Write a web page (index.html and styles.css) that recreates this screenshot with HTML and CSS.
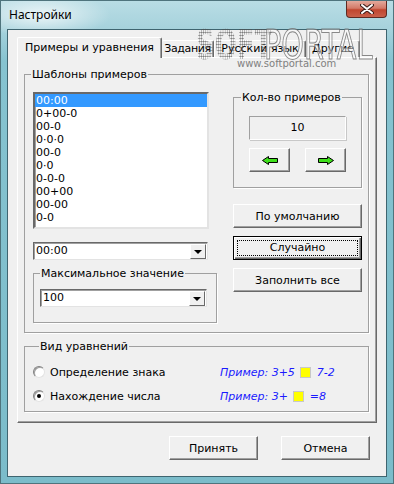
FILE: index.html
```html
<html>
<head>
<title>Настройки</title>
<link rel="stylesheet" href="styles.css">
</head>
<body>
<div class="window">
  <div class="titlebar">
    <span class="title">Настройки</span>
    <div class="close">
      <svg width="14" height="10" viewBox="0 0 14 10"><path d="M2 1 L12 9 M12 1 L2 9" stroke="#3b1c18" stroke-width="4" stroke-linecap="round"/><path d="M2 1 L12 9 M12 1 L2 9" stroke="#fff" stroke-width="2" stroke-linecap="round"/></svg>
    </div>
  </div>

  <div class="client">
    <div class="tabs">
      <div class="tab active">Примеры и уравнения</div>
      <div class="tab t2">Задания</div>
      <div class="tab t3">Русский язык</div>
      <div class="tab t4">Другие</div>
    </div>

    <div class="panel">
      <fieldset class="group g-templates">
        <legend>Шаблоны примеров</legend>
        <div class="templates-body">
          <div class="col-left">
            <ul class="listbox">
              <li class="sel">00:00</li>
              <li>0+00-0</li>
              <li>00-0</li>
              <li>0·0·0</li>
              <li>00-0</li>
              <li>0·0</li>
              <li>0-0-0</li>
              <li>00+00</li>
              <li>00-00</li>
              <li>0-0</li>
            </ul>
            <div class="combo c-templ"><span>00:00</span><span class="drop"><i></i></span></div>
            <fieldset class="group g-max">
              <legend>Максимальное значение</legend>
              <div class="combo c-max"><span>100</span><span class="drop"><i></i></span></div>
            </fieldset>
          </div>
          <div class="col-right">
            <fieldset class="group g-count">
              <legend>Кол-во примеров</legend>
              <div class="count">10</div>
              <div class="arrows">
                <div class="btn arrow">
                  <svg width="16" height="9" viewBox="0 0 16 9"><polygon points="0.5,4.5 6.5,0.5 6.5,2.5 15.5,2.5 15.5,6.5 6.5,6.5 6.5,8.5" fill="#3ee01a" stroke="#000" stroke-width="1"/></svg>
                </div>
                <div class="btn arrow">
                  <svg width="16" height="9" viewBox="0 0 16 9"><polygon points="15.5,4.5 9.5,0.5 9.5,2.5 0.5,2.5 0.5,6.5 9.5,6.5 9.5,8.5" fill="#3ee01a" stroke="#000" stroke-width="1"/></svg>
                </div>
              </div>
            </fieldset>
            <div class="btn wide">По умолчанию</div>
            <div class="btn wide focus"><span>Случайно</span></div>
            <div class="btn wide">Заполнить все</div>
          </div>
        </div>
      </fieldset>

      <fieldset class="group g-kind">
        <legend>Вид уравнений</legend>
        <div class="kind-row">
          <span class="radio"></span>
          <span class="kind-label">Определение знака</span>
          <span class="sample">Пример: 3+5 <b class="box"></b> 7-2</span>
        </div>
        <div class="kind-row">
          <span class="radio on"></span>
          <span class="kind-label">Нахождение числа</span>
          <span class="sample">Пример: 3+ <b class="box"></b> =8</span>
        </div>
      </fieldset>
    </div>

    <div class="footer">
      <div class="btn foot">Принять</div>
      <div class="btn foot">Отмена</div>
    </div>
  </div>

  <div class="watermark">
    <span class="wm-soft">SOFT</span>
    <span class="wm-portal">PORTAL</span>
    <span class="wm-url">www.softportal.com</span>
  </div>
</div>
</body>
</html>
```

FILE: styles.css
```css
* {
  box-sizing: border-box;
}

body {
  margin: 0;
  font-family: "DejaVu Sans", sans-serif;
  font-size: 11px;
  color: #000;
}

.window {
  position: relative;
  width: 394px;
  height: 484px;
  overflow: hidden;
  display: flex;
  flex-direction: column;
  padding: 0 6px 6px;
  border: 1px solid #4f747d;
  background: radial-gradient(ellipse 70px 22px at 40px 14px, rgba(255,255,255,0.75), rgba(255,255,255,0) 100%),
              linear-gradient(to bottom, #b9dde5 0, #a6d2dc 28px, #86c3d0 60px, #7bbcca 100%);
}

.titlebar {
  height: 28px;
  margin: 0 -6px;
  padding-left: 8px;
  display: flex;
}

.title {
  font-family: "Noto Sans", sans-serif;
  font-size: 12px;
  line-height: 28px;
}

.close {
  margin-left: auto;
  margin-right: 6px;
  width: 41px;
  height: 17px;
  border: 1px solid #5e2a22;
  border-top: none;
  border-radius: 0 0 4px 4px;
  background: linear-gradient(to bottom, #e3a99c 0, #d47a68 45%, #c0462f 55%, #c9604a 100%);
  display: flex;
  align-items: center;
  justify-content: center;
}

.close svg {
  display: block;
}

.client {
  flex: 1;
  border: 1px solid #3f6570;
  background: #f0f0f0;
  padding-top: 7px;
}

/* tabs */
.tabs {
  height: 20px;
  padding-left: 9px;
  display: flex;
  align-items: flex-end;
  position: relative;
  z-index: 1;
}

.tab {
  height: 17px;
  line-height: 15px;
  text-align: center;
  white-space: nowrap;
  overflow: hidden;
  background: #f0f0f0;
  border-top: 1px solid #fff;
  border-left: 1px solid #fff;
  border-right: 1px solid #696969;
  box-shadow: inset -1px 0 0 #a0a0a0;
  border-radius: 2px 2px 0 0;
}

.tab.active {
  width: 145px;
  height: 21px;
  margin-bottom: -1px;
  line-height: 19px;
}

.t2 { width: 52px; border-left: none; letter-spacing: -0.4px; }
.t3 { width: 92px; }
.t4 { width: 54px; }

.panel {
  margin: 0 9px;
  height: 366px;
  border-top: 1px solid #fff;
  border-left: 1px solid #fff;
  border-right: 1px solid #696969;
  border-bottom: 1px solid #696969;
  box-shadow: inset -1px -1px 0 #a0a0a0;
  padding-top: 10px;
  padding-left: 6px;
}

/* group boxes */
.group {
  margin: 0;
  padding: 0;
  min-width: 0;
  border: 1px solid #a0a0a0;
  box-shadow: 1px 1px 0 #fff;
}

.group legend {
  padding: 0 1px;
  margin-left: 6px;
  line-height: 13px;
  height: 13px;
}

.g-templates {
  width: 345px;
  height: 265px;
}

.templates-body {
  display: flex;
  gap: 16px;
  padding: 10px 0 0 8px;
}

.col-left {
  width: 184px;
  display: flex;
  flex-direction: column;
}

.listbox {
  list-style: none;
  margin: 1px 0 0;
  padding: 0;
  width: 176px;
  height: 137px;
  background: #fff;
  border-top: 2px solid #696969;
  border-left: 2px solid #696969;
  border-right: 2px solid #e3e3e3;
  border-bottom: 2px solid #e3e3e3;
  box-shadow: inset 1px 1px 0 #a0a0a0;
}

.listbox li {
  height: 13px;
  line-height: 13px;
  padding-left: 1px;
}

.listbox li.sel {
  background: #3399ff;
  color: #fff;
}

.combo {
  height: 18px;
  display: flex;
  align-items: stretch;
  background: #fff;
  border-top: 1px solid #696969;
  border-left: 1px solid #696969;
  border-right: 1px solid #e3e3e3;
  border-bottom: 1px solid #e3e3e3;
  box-shadow: inset 1px 1px 0 #a0a0a0;
  line-height: 16px;
  padding-left: 2px;
}

.combo span:first-child {
  flex: 1;
}

.drop {
  width: 16px;
  margin: 1px 1px 0 0;
  background: #f0f0f0;
  border-top: 1px solid #fff;
  border-left: 1px solid #fff;
  border-right: 1px solid #696969;
  border-bottom: 1px solid #696969;
  display: flex;
  align-items: center;
  justify-content: center;
}

.drop i {
  width: 0;
  height: 0;
  border-left: 4px solid transparent;
  border-right: 4px solid transparent;
  border-top: 4px solid #000;
}

.c-templ {
  width: 175px;
  margin-top: 13px;
}

.g-max {
  margin-top: 7px;
  width: 184px;
  height: 56px;
}

.c-max {
  width: 167px;
  margin: 9px 0 0 6px;
}

.col-right {
  width: 129px;
  display: flex;
  flex-direction: column;
}

.g-count {
  width: 129px;
  height: 97px;
}

.g-count legend {
  margin-left: 7px;
}

.count {
  margin: 12px 0 0 15px;
  width: 97px;
  height: 24px;
  line-height: 22px;
  text-align: center;
  border: 1px solid #a0a0a0;
  border-right-color: #fff;
  border-bottom-color: #fff;
  box-shadow: 1px 1px 0 #c8c8c8;
}

.arrows {
  margin: 8px 0 0 15px;
  width: 97px;
  display: flex;
  justify-content: space-between;
}

/* buttons */
.btn {
  background: #f0f0f0;
  border-top: 1px solid #fff;
  border-left: 1px solid #fff;
  border-right: 1px solid #696969;
  border-bottom: 1px solid #696969;
  box-shadow: inset -1px -1px 0 #a0a0a0;
  display: flex;
  align-items: center;
  justify-content: center;
  white-space: nowrap;
}

.arrow {
  width: 41px;
  height: 24px;
}

.arrow svg {
  display: block;
}

.wide {
  width: 129px;
  height: 24px;
  margin-top: 8px;
}

.g-count + .wide {
  margin-top: 16px;
}

.btn.focus {
  border: 1px solid #000;
  box-shadow: inset 1px 1px 0 #fff, inset -1px -1px 0 #696969, inset -2px -2px 0 #a0a0a0;
  padding: 3px;
}

.btn.focus span {
  flex: 1;
  align-self: stretch;
  text-align: center;
  line-height: 14px;
  border: 1px dotted #000;
}

/* equation kind */
.g-kind {
  margin-top: 7px;
  width: 345px;
  height: 72px;
  padding: 7px 0 0 8px;
}

.kind-row {
  height: 24px;
  display: flex;
  align-items: center;
}

.radio {
  width: 12px;
  height: 12px;
  border-radius: 50%;
  background: #fff;
  border: 1px solid;
  border-color: #808080 #e3e3e3 #e3e3e3 #808080;
  box-shadow: inset 1px 1px 0 #a0a0a0;
  display: flex;
  align-items: center;
  justify-content: center;
}

.radio.on::after {
  content: "";
  width: 4px;
  height: 4px;
  border-radius: 50%;
  background: #000;
}

.kind-label {
  width: 175px;
  padding-left: 5px;
}

.sample {
  color: #1a1aff;
  font-style: italic;
  display: flex;
  align-items: center;
  white-space: pre;
}

.box {
  display: inline-block;
  width: 11px;
  height: 11px;
  background: #ffff00;
  border: 1px solid #c8c8c8;
  margin: 0 2px;
}

.footer {
  display: flex;
  justify-content: flex-end;
  gap: 23px;
  padding-right: 16px;
  margin-top: 13px;
}

.foot {
  width: 89px;
  height: 24px;
}

/* site watermark laid over the screenshot */
.watermark {
  position: absolute;
  z-index: 2;
  left: 195px;
  top: 24px;
  width: 190px;
  height: 48px;
  pointer-events: none;
  line-height: 1;
}

.wm-soft,
.wm-portal {
  position: absolute;
  top: 0;
  font-family: "DejaVu Sans Condensed", "Liberation Sans Narrow", sans-serif;
  font-size: 40px;
  transform-origin: 0 0;
}

.wm-soft {
  left: 0;
  font-weight: bold;
  transform: scaleX(0.72);
  color: transparent;
  background: radial-gradient(circle, rgba(80,80,80,0.75) 45%, transparent 50%) 0 0 / 3px 3px;
  -webkit-background-clip: text;
  background-clip: text;
}

.wm-portal {
  left: 68px;
  transform: scaleX(0.8);
  color: rgba(255,255,255,0.45);
  -webkit-text-stroke: 1px rgba(100,100,100,0.75);
}

.wm-url {
  position: absolute;
  left: 41px;
  top: 34px;
  font-size: 10px;
  color: #808080;
}
```
